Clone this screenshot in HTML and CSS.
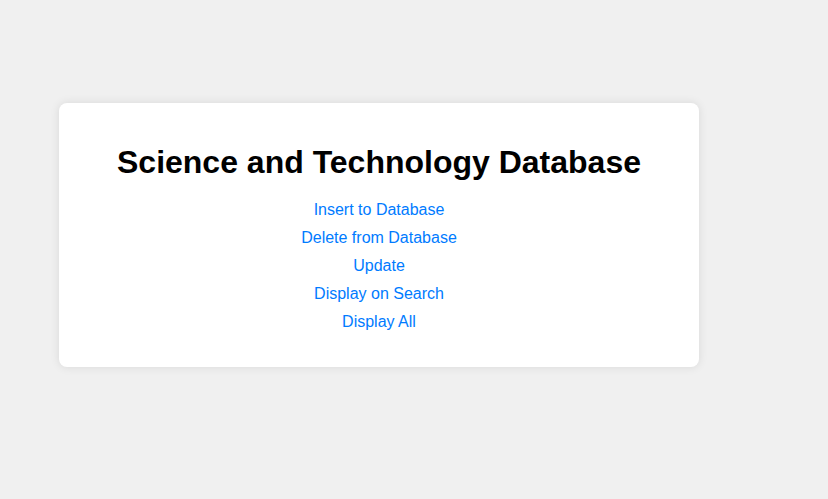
FILE: index.html
```html
<!DOCTYPE html>
<html lang="en">
<head>
<meta charset="utf-8">
<title>Science and Technology Database</title>
<link rel="stylesheet" href="styles.css">
</head>
<body>
<div class="card">
  <h1 class="title">Science and Technology Database</h1>
  <nav class="links">
    <a href="#" class="link">Insert to Database</a>
    <a href="#" class="link">Delete from Database</a>
    <a href="#" class="link">Update</a>
    <a href="#" class="link">Display on Search</a>
    <a href="#" class="link">Display All</a>
  </nav>
</div>
</body>
</html>
```
FILE: styles.css
```css
html, body {
  margin: 0;
  padding: 0;
}
body {
  background: #f0f0f0;
  font-family: "Liberation Sans", Arial, sans-serif;
  min-height: 499px;
  padding-top: 103px;
  padding-left: 59px;
  box-sizing: border-box;
}
.card {
  width: 640px;
  box-sizing: border-box;
  background: #fff;
  border-radius: 8px;
  box-shadow: 0 0 10px rgba(0, 0, 0, 0.1);
  padding: 41px 20px 31px;
  text-align: center;
}
.title {
  margin: 0 0 16px;
  font-size: 32px;
  line-height: 36px;
  font-weight: bold;
  color: #000;
}
.links {
  display: flex;
  flex-direction: column;
  align-items: center;
}
.link {
  display: block;
  font-size: 16px;
  line-height: 28px;
  color: #007bff;
  text-decoration: none;
}
```
